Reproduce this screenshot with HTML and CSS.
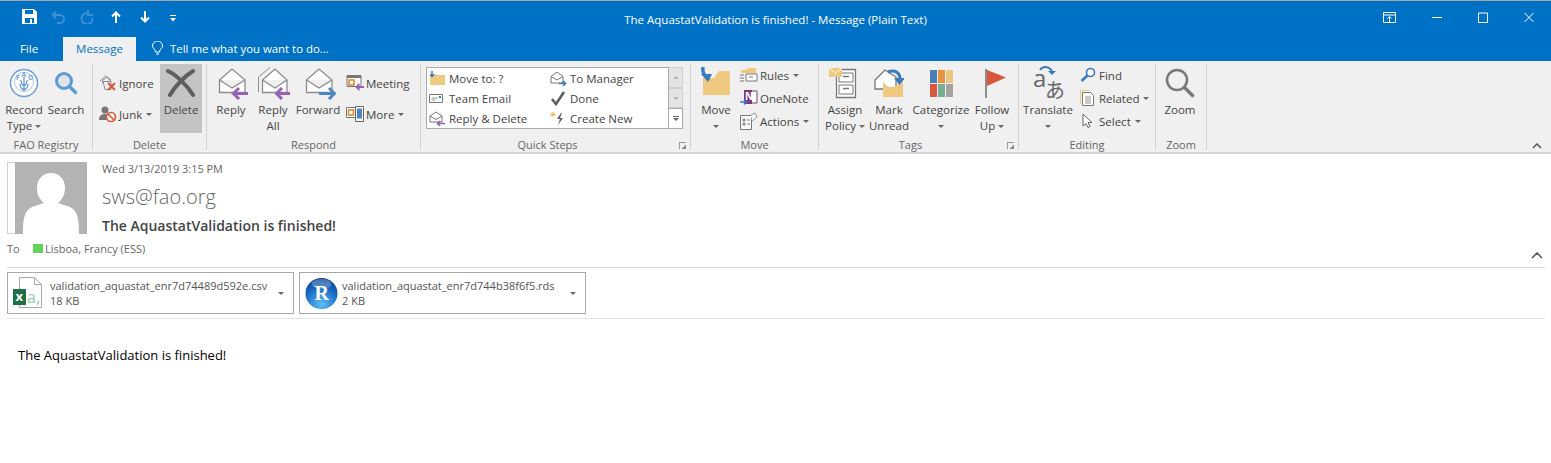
FILE: index.html
```html
<!DOCTYPE html>
<html lang="en">
<head>
<meta charset="utf-8">
<title>The AquastatValidation is finished! - Message (Plain Text)</title>
<link rel="stylesheet" href="styles.css">
</head>
<body>
<header class="titlebar">
  <div class="qat">
    <svg class="q-save" width="15" height="15" viewBox="0 0 15 15"><path d="M0 0h12l3 3v12H0z" fill="#fff"/><path d="M3 1h8v4H3zM3 9h9v5H3z" fill="#0072c6"/><path d="M8 10h2v4H8z" fill="#fff"/></svg>
    <svg class="q-undo" width="14" height="14" viewBox="0 0 14 14"><path d="M2 5h7a4 4 0 0 1 0 8H6M5 1.500 1.500 5 5 8.500" fill="none" stroke="#3f8fd2" stroke-width="2"/></svg>
    <svg class="q-redo" width="14" height="14" viewBox="0 0 14 14"><path d="M9 3.500A5.500 5.500 0 1 0 12.500 8M8 0v5h5" fill="none" stroke="#3f8fd2" stroke-width="2"/></svg>
    <svg class="q-up" width="10" height="12" viewBox="0 0 10 12"><path d="M5 12V2M1 5.500 5 1.500l4 4" fill="none" stroke="#fff" stroke-width="2"/></svg>
    <svg class="q-down" width="10" height="12" viewBox="0 0 10 12"><path d="M5 0v10M1 6.500l4 4 4-4" fill="none" stroke="#fff" stroke-width="2"/></svg>
    <svg class="q-more" width="6" height="7" viewBox="0 0 6 7"><path d="M0 0h6v1H0zM0 3h6L3 6.500z" fill="#fff"/></svg>
  </div>
  <div class="title">The AquastatValidation is finished! - Message (Plain Text)</div>
  <div class="winctl">
    <svg width="13" height="11" viewBox="0 0 13 11"><path d="M.5.500h12v10H.5zM.5 3h12M6.500 10V5M4.500 6.500l2-2 2 2" fill="none" stroke="#fff"/></svg>
    <svg width="10" height="11" viewBox="0 0 10 11"><path d="M0 5.500h10" stroke="#fff"/></svg>
    <svg width="10" height="11" viewBox="0 0 10 11"><path d="M.5 1h9v9.500h-9z" fill="none" stroke="#fff"/></svg>
    <svg width="10" height="11" viewBox="0 0 10 11"><path d="M.5 1 9.500 10M9.500 1 .5 10" stroke="#fff"/></svg>
  </div>
</header>

<nav class="tabs">
  <span class="tab">File</span>
  <span class="tab tab-active">Message</span>
  <span class="tell">
    <svg width="11" height="15" viewBox="0 0 11 15"><path d="M3.500 11C3.500 8 .5 7.500.5 5a5 5 0 0 1 10 0c0 2.500-3 3-3 6zM4 13h3" fill="none" stroke="#fff"/></svg>
    Tell me what you want to do...
  </span>
</nav>

<section class="ribbon">
  <div class="group g-fao">
    <div class="gbody">
      <div class="big w40">
        <div class="ico">
          <svg width="30" height="30" viewBox="0 0 30 30"><circle cx="15" cy="15" r="13.500" fill="#fff" stroke="#6f9fd8" stroke-width="1.500"/><circle cx="15" cy="14" r="9.500" fill="none" stroke="#a9c5e8"/><path d="M15 9v14M12 12c0 3 1 5 3 6 2-1 3-3 3-6M11 16c0 3 2 5 4 6 2-1 4-3 4-6" fill="none" stroke="#6f9fd8" stroke-width="1.400"/><text class="fao-t" x="7" y="12">F</text><text class="fao-t" x="12.500" y="9">A</text><text class="fao-t" x="19" y="12">O</text></svg>
        </div>
        <div class="lbl">Record<br>Type <i class="caret"></i></div>
      </div>
      <div class="big w40">
        <div class="ico">
          <svg width="24" height="26" viewBox="0 0 24 26"><circle cx="10" cy="11" r="7.500" fill="#dfe3e8" stroke="#5b9bd5" stroke-width="3"/><path d="m15.500 16.500 6 6" stroke="#5b9bd5" stroke-width="3.500" stroke-linecap="round"/></svg>
        </div>
        <div class="lbl">Search</div>
      </div>
    </div>
    <div class="glabel">FAO Registry</div>
  </div>

  <div class="group g-del">
    <div class="gbody">
      <div class="smallcol two w61">
        <div class="sm">
          <svg class="sico" width="18" height="18" viewBox="0 0 18 18"><path d="M1 7 6.500 2 12 7M3.500 9V6.500L8 3l4 3" fill="none" stroke="#8a8a8a"/><path d="M4 7.500h8v8H6z" fill="#f0f0f0" stroke="#8a8a8a"/><path d="m9 9 7 7M16 9l-7 7" stroke="#d9583b" stroke-width="2"/></svg>
          Ignore
        </div>
        <div class="sm">
          <svg class="sico" width="18" height="18" viewBox="0 0 18 18"><circle cx="6" cy="5" r="3.500" fill="#777"/><path d="M0 15c0-5 3-6 6-6s4 1 4 3v3z" fill="#777"/><circle cx="12" cy="12" r="4.500" fill="#fff" stroke="#d9583b" stroke-width="1.700"/><path d="m9 9 6 6" stroke="#d9583b" stroke-width="1.700"/></svg>
          Junk <i class="caret"></i>
        </div>
      </div>
      <div class="big w42 pressed">
        <div class="ico">
          <svg width="30" height="30" viewBox="0 0 30 30"><path d="M2 3c7 3 19 14 25 24M27 3C19 8 9 18 4 27" fill="none" stroke="#5e5e5e" stroke-width="4" stroke-linecap="round"/></svg>
        </div>
        <div class="lbl">Delete</div>
      </div>
    </div>
    <div class="glabel">Delete</div>
  </div>

  <div class="group g-res">
    <div class="gbody">
      <div class="big w40">
        <div class="ico">
          <svg width="34" height="34" viewBox="0 0 34 34"><path d="M5.500 14 18 3l13 11v12.500H5.500zM5.500 14 18 22l13-8" fill="#fff" stroke="#8c8c8c" stroke-width="1.300"/><path d="M34 27.500H21M25 22l-5.500 5.500L25 33" fill="none" stroke="#9561b5" stroke-width="3"/></svg>
        </div>
        <div class="lbl">Reply</div>
      </div>
      <div class="big w40">
        <div class="ico">
          <svg width="34" height="34" viewBox="0 0 34 34"><path d="M2.500 26V11L14 1.500" fill="none" stroke="#8c8c8c"/><path d="M6.500 14 19 3l12 11v12.500H6.500zM6.500 14 19 22l12-8" fill="#fff" stroke="#8c8c8c" stroke-width="1.300"/><path d="M34 27.500H22M26 22l-5.500 5.500L26 33" fill="none" stroke="#9561b5" stroke-width="3"/></svg>
        </div>
        <div class="lbl">Reply<br>All</div>
      </div>
      <div class="big w46">
        <div class="ico">
          <svg width="36" height="34" viewBox="0 0 36 34"><path d="M6.500 14 19 3l13 11v12.500H6.500zM6.500 14 19 22l13-8" fill="#fff" stroke="#8c8c8c" stroke-width="1.300"/><path d="M19 27.500h15M29 22l5.500 5.500L29 33" fill="none" stroke="#4a86c0" stroke-width="3"/></svg>
        </div>
        <div class="lbl">Forward</div>
      </div>
      <div class="smallcol two gapl">
        <div class="sm">
          <svg class="sico" width="18" height="18" viewBox="0 0 18 18"><path d="M1 1.500h14v11H1z" fill="#fff" stroke="#777"/><path d="M1 1h14v3H1z" fill="#777"/><path d="M3 6h5v5H3z" fill="#fff" stroke="#e2822b" stroke-width="1.500"/><path d="M18 13h-7M13.500 10 10.500 13l3 3" fill="none" stroke="#9561b5" stroke-width="1.800"/></svg>
          Meeting
        </div>
        <div class="sm">
          <svg class="sico" width="18" height="18" viewBox="0 0 18 18"><path d="M.5 2.500h10v10H.5z" fill="#fff" stroke="#777"/><path d="M2.500 5h5v5h-5z" fill="#fff" stroke="#e2822b" stroke-width="1.500"/><path d="M9.500 1.500h8v15h-8z" fill="#fff" stroke="#666"/><path d="M11 3.500h5v10h-5z" fill="#4a86c0"/></svg>
          More <i class="caret"></i>
        </div>
      </div>
    </div>
    <div class="glabel">Respond</div>
  </div>

  <div class="group g-qs">
    <div class="gbody">
      <div class="gallery">
        <div class="qs-grid">
          <div class="qs">
            <svg class="qico" width="17" height="15" viewBox="0 0 17 15"><path d="M1 3h6l1 1h8v10H1z" fill="#efc97f"/><path d="M3 0v5M1 3.500l2 2 2-2" fill="none" stroke="#3a7abf" stroke-width="1.500"/></svg>
            Move to: ?
          </div>
          <div class="qs">
            <svg class="qico" width="17" height="15" viewBox="0 0 17 15"><path d="M1 5.500 7 1l6 4.500V12H1zM1 5.500 7 9l6-3.500" fill="#fff" stroke="#777"/><path d="M9 12.500h6M13 10l2.500 2.500L13 15" fill="none" stroke="#3a7abf" stroke-width="1.600"/></svg>
            To Manager
          </div>
          <div class="qs">
            <svg class="qico" width="17" height="15" viewBox="0 0 17 15"><path d="M.5 3.500h13v8H.5z" fill="#fff" stroke="#777"/><path d="M2.500 7h6M2.500 9h4" stroke="#999"/><path d="M10 5h2v2h-2z" fill="#3a7abf"/></svg>
            Team Email
          </div>
          <div class="qs">
            <svg class="qico" width="17" height="15" viewBox="0 0 17 15"><path d="m2 8 4 5 8-12" fill="none" stroke="#5e5e5e" stroke-width="2.600"/></svg>
            Done
          </div>
          <div class="qs">
            <svg class="qico" width="17" height="15" viewBox="0 0 17 15"><path d="M1 5 7 1l6 4v6H1zM1 5l6 3.500L13 5" fill="#fff" stroke="#777"/><path d="M16 12.500h-7M11 10 8.500 12.500 11 15" fill="none" stroke="#9561b5" stroke-width="1.600"/></svg>
            Reply &amp; Delete
          </div>
          <div class="qs">
            <svg class="qico" width="17" height="15" viewBox="0 0 17 15"><path d="M3 1v5M.5 3.500h5M1 1.500l4 4M5 1.500l-4 4" stroke="#eeb35a"/><path d="M11 2 7 8h3L8 14l5-7h-3l2-5z" fill="#5e5e5e"/></svg>
            Create New
          </div>
        </div>
        <div class="scroller">
          <span class="sc"><i class="tri-up"></i></span>
          <span class="sc"><i class="tri-dn"></i></span>
          <span class="sc sc-more"><i class="bar"></i><i class="tri-dn dark"></i></span>
        </div>
      </div>
    </div>
    <div class="glabel has-launch">Quick Steps<i class="launch"></i></div>
  </div>

  <div class="group g-mov">
    <div class="gbody">
      <div class="big w42">
        <div class="ico">
          <svg width="32" height="32" viewBox="0 0 32 32"><path d="M3 11h11l5-7h11v24H3z" fill="#efc97f"/><path d="M3 0c-1 6 2 10 7 11" fill="none" stroke="#3a7abf" stroke-width="3.500"/><path d="M1 7l7 8 4-8z" fill="#3a7abf"/></svg>
        </div>
        <div class="lbl">Move<br><i class="caret"></i></div>
      </div>
      <div class="smallcol three gapl1">
        <div class="sm">
          <svg class="sico" width="18" height="18" viewBox="0 0 18 18"><path d="M1 4h5l2-2h8v5H1z" fill="#efc97f"/><path d="M6 8h11v7H6z" fill="#fff" stroke="#777"/><path d="M0 9h4M0 12h4M0 15h4M9 11h4" stroke="#777"/></svg>
          Rules <i class="caret"></i>
        </div>
        <div class="sm">
          <svg class="sico" width="18" height="18" viewBox="0 0 18 18"><path d="M6 2h11v12H6z" fill="#fff" stroke="#80397b"/><path d="M4 1h8v14H4z" fill="#80397b"/><text class="on-t" x="5" y="11">N</text><path d="M0 13h6M4 10.500 6.500 13 4 15.500" fill="none" stroke="#3a7abf" stroke-width="1.600"/></svg>
          OneNote
        </div>
        <div class="sm">
          <svg class="sico" width="18" height="18" viewBox="0 0 18 18"><path d="M.5 3.500h11v14H.5z" fill="#fff" stroke="#777"/><path d="M3 7h2v2H3zM3 11h2v2H3zM7 8h3M7 12h3" stroke="#777" fill="none"/><path d="m11 3 4-2 2 4-5 4" fill="#fff" stroke="#999"/></svg>
          Actions <i class="caret"></i>
        </div>
      </div>
    </div>
    <div class="glabel">Move</div>
  </div>

  <div class="group g-tag">
    <div class="gbody">
      <div class="big w44">
        <div class="ico">
          <svg width="32" height="32" viewBox="0 0 32 32"><path d="M7.500 2.500h19v28h-19z" fill="#fff" stroke="#777" stroke-width="1.300"/><path d="M10 6h14v9H10zM10 18h14v9H10z" fill="none" stroke="#777"/><path d="M14 9.500h6M14 21.500h6" stroke="#777" stroke-width="1.500"/><path d="M0 1h13v9H0z" fill="#efc97f"/><path d="m0 1 6.500 5L13 1" fill="none" stroke="#fff"/></svg>
        </div>
        <div class="lbl">Assign<br>Policy <i class="caret"></i></div>
      </div>
      <div class="big w40">
        <div class="ico">
          <svg width="30" height="32" viewBox="0 0 30 32"><path d="M1 13 11 3l11 7v12H1z" fill="#fff" stroke="#777" stroke-width="1.300"/><path d="M9 14c4 8 10 8 20 0v16H9z" fill="#efc97f"/><path d="M14 5c7-3 12 1 12 7" fill="none" stroke="#3a7abf" stroke-width="3"/><path d="M20 11h11l-5.500 7z" fill="#3a7abf"/></svg>
        </div>
        <div class="lbl">Mark<br>Unread</div>
      </div>
      <div class="big w60">
        <div class="ico">
          <div class="cats">
            <i class="c1"></i><i class="c2"></i><i class="c3"></i>
            <i class="c4"></i><i class="c5"></i><i class="c6"></i>
          </div>
        </div>
        <div class="lbl">Categorize<br><i class="caret"></i></div>
      </div>
      <div class="big w38">
        <div class="ico">
          <svg class="flag" width="21" height="29" viewBox="0 0 21 29"><path d="M0 0h2v29H0z" fill="#8c8c8c"/><path d="M2 1l19 7.500L2 17z" fill="#d9583b"/></svg>
        </div>
        <div class="lbl">Follow<br>Up <i class="caret"></i></div>
      </div>
    </div>
    <div class="glabel has-launch">Tags<i class="launch"></i></div>
  </div>

  <div class="group g-edi">
    <div class="gbody">
      <div class="big w50">
        <div class="ico">
          <svg width="36" height="46" viewBox="0 -4 36 46"><path d="M10 6c3-4 9-4 12 1" fill="none" stroke="#3a7abf" stroke-width="2"/><path d="M18 7h8l-4 4z" fill="#3a7abf"/><text class="tr-a" x="3" y="23">a</text><text class="tr-j" x="15" y="34">あ</text></svg>
        </div>
        <div class="lbl">Translate<br><i class="caret"></i></div>
      </div>
      <div class="smallcol three gapl2">
        <div class="sm">
          <svg class="sico" width="16" height="16" viewBox="0 0 16 16"><circle cx="10.500" cy="5.500" r="4" fill="#fff" stroke="#3a7abf" stroke-width="1.600"/><path d="M7.500 8.500 1.500 14" stroke="#3a7abf" stroke-width="2.500"/></svg>
          Find
        </div>
        <div class="sm">
          <svg class="sico" width="16" height="16" viewBox="0 0 16 16"><path d="M.5 14V.5H9" fill="none" stroke="#efc97f"/><path d="M2.500 2.500h8l3 3v10h-11z" fill="#fff" stroke="#777"/><path d="M5 7h6M5 9h6M5 11h6M5 13h6" stroke="#777" stroke-width=".8"/></svg>
          Related <i class="caret"></i>
        </div>
        <div class="sm">
          <svg class="sico" width="16" height="16" viewBox="0 0 16 16"><path d="M3 1v12l3-2.500 2 4 2-1-2-4h4z" fill="#fff" stroke="#666"/></svg>
          Select <i class="caret"></i>
        </div>
      </div>
    </div>
    <div class="glabel">Editing</div>
  </div>

  <div class="group g-zoo">
    <div class="gbody">
      <div class="big w40">
        <div class="ico">
          <svg width="30" height="30" viewBox="0 0 30 30"><circle cx="12" cy="12" r="10" fill="none" stroke="#7a7a7a" stroke-width="2.600"/><path d="m19.500 19.500 8 8" stroke="#7a7a7a" stroke-width="3.600" stroke-linecap="round"/></svg>
        </div>
        <div class="lbl">Zoom</div>
      </div>
    </div>
    <div class="glabel">Zoom</div>
  </div>
  <svg class="collapse" width="10" height="6" viewBox="0 0 10 6"><path d="m1 5 4-4 4 4" fill="none" stroke="#555" stroke-width="1.500"/></svg>
</section>

<main class="message">
  <div class="head">
    <div class="avatar">
      <svg width="72" height="72" viewBox="0 0 72 72"><path d="M0 0h72v72H0z" fill="#b3b3b3"/><path d="M8 72c0-18 2-25 12-28l9-3c-5-4-7-9-7-15 0-9 6-15 14-15s14 6 14 15c0 6-2 11-7 15l9 3c10 3 12 10 12 28z" fill="#fff"/></svg>
    </div>
    <div class="info">
      <div class="date">Wed 3/13/2019 3:15 PM</div>
      <div class="from">sws@fao.org</div>
      <div class="subject">The AquastatValidation is finished!</div>
    </div>
  </div>
  <div class="to">
    <span class="to-k">To</span>
    <i class="presence"></i>
    <span>Lisboa, Francy (ESS)</span>
    <svg class="to-col" width="12" height="7" viewBox="0 0 12 7"><path d="m1 6 5-5 5 5" fill="none" stroke="#555" stroke-width="1.500"/></svg>
  </div>
  <div class="attachments">
    <div class="att">
      <svg class="att-ico" width="30" height="33" viewBox="0 0 30 33"><path d="M6.500 1.500h15l7 7v23h-22z" fill="#fff" stroke="#aaa"/><path d="M21.500 1.500v7h7" fill="none" stroke="#aaa"/><path d="M0 13h13v16H0z" fill="#1e7145"/><text class="x-t" x="2.500" y="25">x</text><text class="a-t" x="14" y="27">a,</text></svg>
      <div class="att-txt"><div class="att-name">validation_aquastat_enr7d74489d592e.csv</div><div class="att-size">18 KB</div></div>
      <i class="caret att-caret"></i>
    </div>
    <div class="att">
      <svg class="att-ico" width="33" height="35" viewBox="0 0 33 35"><defs><radialGradient id="rg" cx=".5" cy=".85" r=".85"><stop offset="0" stop-color="#5ec0f2"/><stop offset=".6" stop-color="#1a6fc8"/><stop offset="1" stop-color="#0b3f8c"/></radialGradient></defs><ellipse cx="16.500" cy="17.500" rx="16" ry="15.500" fill="url(#rg)"/><ellipse cx="16.500" cy="8" rx="10" ry="5" fill="#fff" opacity=".25"/><text class="r-t" x="9.500" y="24">R</text></svg>
      <div class="att-txt"><div class="att-name">validation_aquastat_enr7d744b38f6f5.rds</div><div class="att-size">2 KB</div></div>
      <i class="caret att-caret"></i>
    </div>
  </div>
  <div class="content">The AquastatValidation is finished!</div>
</main>
</body>
</html>
```
FILE: styles.css
```css
* { box-sizing: border-box; }
html, body { margin: 0; height: 100%; }
body { width: 1551px; height: 463px; overflow: hidden; background: #fff; font-family: "Open Sans", "Liberation Sans", sans-serif; font-size: 11.5px; color: #444; }
i { font-style: normal; }
svg { display: block; flex: none; }

.titlebar { display: grid; grid-template-columns: 1fr auto 1fr; height: 37px; background: #0072c6; border-top: 1px solid #a6a6a6; color: #fff; }
.qat { display: flex; align-items: flex-start; padding: 8px 0 0 22px; }
.q-undo { margin: 1px 0 0 14px; }
.q-redo { margin: 1px 0 0 15px; }
.q-up { margin: 2px 0 0 17px; }
.q-down { margin: 2px 0 0 19px; }
.q-more { margin: 6px 0 0 20px; }
.title { font-size: 11.5px; line-height: 16px; padding-top: 11px; }
.winctl { display: flex; justify-content: flex-end; align-items: flex-start; gap: 36px; padding: 11px 17px 0 0; }

.tabs { display: flex; align-items: stretch; height: 24px; background: #0072c6; color: #fff; }
.tab { width: 63px; padding-right: 5px; line-height: 24px; font-size: 11.5px; text-align: center; }
.tab-active { width: 73px; padding-right: 0; background: #f0f0f0; color: #0072c6; }
.tell { display: flex; align-items: center; gap: 7px; margin-left: 16px; padding-bottom: 1px; font-size: 11.4px; }

.ribbon { position: relative; display: flex; height: 93px; padding-top: 3px; background: #f0f0f0; border-bottom: 2px solid #d6d6d6; }
.group { display: flex; flex-direction: column; height: 86px; border-right: 1px solid #d2d2d2; }
.gbody { display: flex; gap: 2px; height: 73px; padding-left: 4px; }
.glabel { position: relative; height: 13px; line-height: 16px; text-align: center; color: #666; font-size: 11px; white-space: nowrap; }
.has-launch { padding-right: 16px; }
.g-fao { width: 93px; }
.g-del { width: 114px; }
.g-del .gbody { padding-left: 6px; gap: 0; }
.g-res { width: 214px; }
.g-qs { width: 270px; }
.g-qs .gbody { padding-left: 5px; }
.g-mov { width: 128px; }
.g-tag { width: 200px; }
.g-edi { width: 137px; }
.g-zoo { width: 51px; }

.big { display: flex; flex-direction: column; align-items: center; height: 69px; white-space: nowrap; }
.ico { display: flex; justify-content: center; align-items: center; height: 38px; flex: none; }
.lbl { line-height: 16px; text-align: center; }
.flag { margin-left: 6px; }
.w38 { width: 38px; } .w40 { width: 40px; } .w42 { width: 42px; } .w44 { width: 44px; }
.w46 { width: 46px; } .w50 { width: 50px; } .w60 { width: 60px; } .w61 { width: 61px; }
.pressed { background: #c4c4c4; }

.caret { display: inline-block; width: 0; height: 0; border: 3px solid transparent; border-top-color: #666; border-bottom: 0; vertical-align: 2px; }

.smallcol { display: flex; flex-direction: column; }
.two { padding-top: 8px; gap: 9px; }
.three { gap: 1px; }
.gapl { margin-left: 3px; }
.gapl1 { margin-left: 1px; }
.gapl2 { margin-left: 4px; }
.sm { display: flex; align-items: center; gap: 2px; height: 22px; white-space: nowrap; }
.sm .caret { margin-left: 2px; }
.sico { width: 18px; }

.gallery { display: flex; height: 62px; margin-top: 3px; }
.qs-grid { display: grid; grid-template-columns: 121px 121px; grid-auto-rows: 20px; width: 243px; height: 62px; background: #fff; border: 1px solid #ababab; padding-left: 2px; }
.qs { display: flex; align-items: center; gap: 3px; white-space: nowrap; }
.scroller { display: flex; flex-direction: column; width: 14px; }
.sc { display: flex; flex-direction: column; align-items: center; justify-content: center; flex: 1; background: #e4e4e4; border: 1px solid #d0d0d0; border-left: 0; border-top-width: 1px; }
.sc-more { background: #fff; border-color: #ababab; gap: 1px; }
.tri-up { width: 0; height: 0; border: 3px solid transparent; border-top: 0; border-bottom-color: #b5b5b5; }
.tri-dn { width: 0; height: 0; border: 3px solid transparent; border-bottom: 0; border-top-color: #b5b5b5; }
.tri-dn.dark { border-top-color: #666; }
.bar { width: 6px; height: 1px; background: #666; }
.launch { position: absolute; right: 4px; top: 5px; width: 7px; height: 7px; border-left: 1px solid #999; border-top: 1px solid #999; background: linear-gradient(135deg, transparent 60%, #888 60%); }

.cats { display: grid; grid-template-columns: repeat(3, 7px); grid-auto-rows: 13px; gap: 1px; }
.c1 { background: #4a7fb5; } .c2 { background: #e8933f; } .c3 { background: #ecc581; }
.c4 { background: #d9583b; } .c5 { background: #7aab96; } .c6 { background: #a3a3a3; }
.collapse { position: absolute; right: 9px; bottom: 3px; }

.fao-t { font: 700 6.500px "Open Sans", sans-serif; fill: #6f9fd8; }
.on-t { font: 700 10px "Open Sans", sans-serif; fill: #fff; }
.tr-a { font: 24px "Open Sans", sans-serif; fill: #666; }
.tr-j { font: 20px "Noto Sans CJK JP", sans-serif; fill: #666; }
.x-t { font: 700 13px "Open Sans", sans-serif; fill: #fff; }
.a-t { font: 16px "Open Sans", sans-serif; fill: #8ecba8; }
.r-t { font: 700 20px "Liberation Serif", serif; fill: #fff; }

.message { padding: 0 6px 0 7px; }
.head { display: flex; padding-top: 8px; }
.avatar { display: flex; justify-content: flex-end; width: 80px; height: 72px; border: 1px solid #d0d0d0; border-right: 0; }
.avatar svg { margin: -1px 0; }
.info { margin-left: 15px; }
.date { height: 14px; line-height: 14px; font-size: 10.900px; color: #666; }
.from { height: 28px; line-height: 28px; margin-top: 7px; font-size: 20px; font-weight: 300; color: #666; }
.subject { height: 20px; line-height: 20px; margin-top: 5px; font-size: 14px; font-weight: 600; color: #444; }
.to { position: relative; display: flex; align-items: flex-start; height: 32px; padding-top: 6px; line-height: 14px; border-bottom: 1px solid #dcdcdc; font-size: 11px; color: #666; }
.to-k { width: 26px; }
.presence { width: 10px; height: 9px; margin: 2px 2px 0 0; background: #5fd35a; }
.to-col { margin: 10px 2px 0 auto; }
.attachments { display: flex; gap: 5px; padding: 4px 0; border-bottom: 1px solid #e2e2e2; }
.att { position: relative; display: flex; align-items: center; width: 287px; height: 42px; border: 1px solid #a8a8a8; }
.att-ico { position: absolute; left: 5px; top: 3px; }
.att-txt { margin-left: 42px; line-height: 15px; font-size: 11px; color: #555; }
.att-caret { position: absolute; right: 9px; top: 19px; }
.content { padding: 27px 0 0 11px; line-height: 18px; font-size: 13px; color: #000; }
```
